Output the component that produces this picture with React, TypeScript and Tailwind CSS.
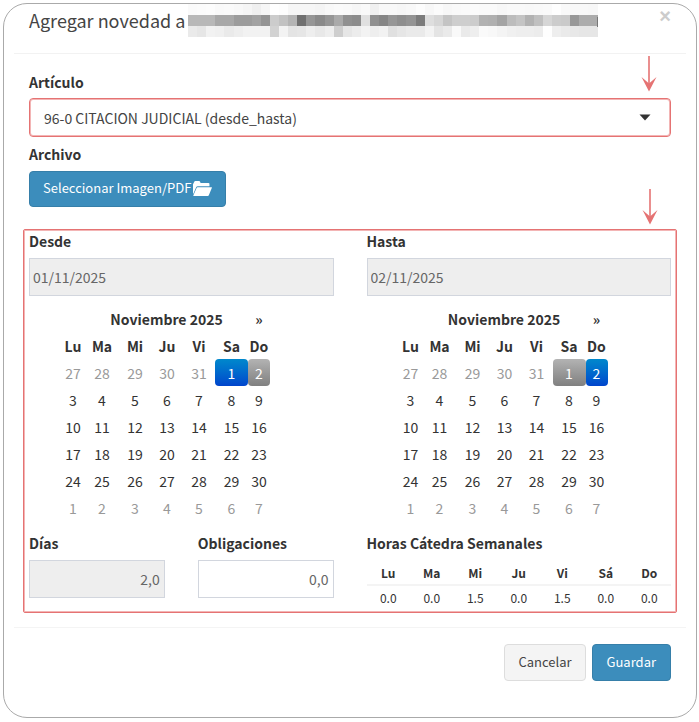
import { useState } from "react";

type Tone = "start" | "range";

const WEEKDAYS = ["Lu", "Ma", "Mi", "Ju", "Vi", "Sa", "Do"];

const WEEKS = [
  [27, 28, 29, 30, 31, 1, 2],
  [3, 4, 5, 6, 7, 8, 9],
  [10, 11, 12, 13, 14, 15, 16],
  [17, 18, 19, 20, 21, 22, 23],
  [24, 25, 26, 27, 28, 29, 30],
  [1, 2, 3, 4, 5, 6, 7],
];

const HOURS = [
  { day: "Lu", value: "0.0" },
  { day: "Ma", value: "0.0" },
  { day: "Mi", value: "1.5" },
  { day: "Ju", value: "0.0" },
  { day: "Vi", value: "1.5" },
  { day: "Sá", value: "0.0" },
  { day: "Do", value: "0.0" },
];

// grey levels of the pixelated name, one row per band, 9px per cell
const MOSAIC = [
  {
    y: 0,
    h: 11,
    cells: [
      250, 251, 252, 249, 250, 248, 245, 239, 246, 255, 253, 246, 246, 246, 244, 248, 250, 249, 246, 249, 240, 248, 248,
      246, 248, 252, 247, 251, 247, 249, 250, 251, 250, 250, 247, 249, 249, 248, 249, 250, 254, 249, 248, 248, 247, 249,
    ],
  },
  {
    y: 11,
    h: 11,
    cells: [
      184, 184, 184, 168, 168, 156, 156, 162, 148, 204, 194, 180, 112, 150, 138, 150, 170, 144, 140, 224, 144, 134, 150,
      142, 148, 124, 222, 214, 196, 206, 206, 204, 178, 176, 164, 188, 196, 178, 192, 214, 204, 202, 152, 172, 172,
    ],
  },
  {
    y: 22,
    h: 11,
    cells: [
      234, 230, 242, 240, 234, 238, 242, 242, 242, 210, 243, 228, 230, 238, 232, 238, 206, 230, 236, 243, 238, 242, 224,
      230, 234, 234, 243, 228, 234, 249, 234, 238, 250, 248, 244, 240, 238, 238, 236, 254, 238, 234, 232, 230, 230,
    ],
  },
];

function Mosaic() {
  return (
    <svg width="410" height="33" viewBox="0 0 410 33" shapeRendering="crispEdges" aria-hidden="true">
      {MOSAIC.map((band) =>
        band.cells.map((level, i) => (
          <rect
            key={`${band.y}-${i}`}
            x={i * 9.1}
            y={band.y}
            width="9.1"
            height={band.h}
            fill={`rgb(${level},${level},${level})`}
          />
        ))
      )}
      <rect x="409" y="13" width="1" height="10" fill="#777" />
    </svg>
  );
}

function Arrow() {
  return (
    <svg width="16" height="36" viewBox="0 0 16 36" aria-hidden="true">
      <path d="M8 0V28" stroke="#e57373" strokeWidth="1.6" />
      <path d="M0.5 21L8 35.5L15.5 21L8 27.5Z" fill="#e57373" />
    </svg>
  );
}

function FolderIcon() {
  return (
    <svg width="19" height="15" viewBox="0 0 18 14" fill="currentColor" aria-hidden="true">
      <path d="M0 12V3L1.2 0.6Q1.5 0 2.2 0H5.8Q6.4 0 6.7 0.6L7.2 1.7H14.6Q15.6 1.7 15.6 2.6V4.8H4.4Q3.5 4.8 3.1 5.5L0.3 12Z" />
      <path d="M4.3 5.9H17.6Q18.1 5.9 17.9 6.4L15 13.3Q14.7 14 14 14H0.6Q0.2 14 0.4 13.5L3.4 6.5Q3.6 5.9 4.3 5.9Z" />
    </svg>
  );
}

function dayClass(outside: boolean, tone?: Tone) {
  if (tone === "start") return "bg-linear-to-b from-[#0088cc] to-[#0044cc] text-white";
  if (tone === "range") return "bg-linear-to-b from-[#b3b3b3] to-[#808080] text-white";
  return outside ? "text-[#999]" : "text-[#333]";
}

function Calendar({ tones }: { tones: Record<string, Tone> }) {
  return (
    <table className="ml-8 table-fixed border-separate border-spacing-0 text-center">
      <colgroup>
        <col className="w-6" />
        <col className="w-[34px]" />
        <col className="w-8" />
        <col className="w-8" />
        <col className="w-8" />
        <col className="w-[33px]" />
        <col className="w-[22px]" />
      </colgroup>
      <thead>
        <tr className="h-[27px]">
          <td />
          <th colSpan={5}>Noviembre 2025</th>
          <th>
            <button type="button" aria-label="Mes siguiente">
              »
            </button>
          </th>
        </tr>
        <tr className="h-[27px]">
          {WEEKDAYS.map((day) => (
            <th key={day}>{day}</th>
          ))}
        </tr>
      </thead>
      <tbody>
        {WEEKS.map((week, row) => (
          <tr key={row} className="h-[27px]">
            {week.map((day, col) => {
              const outside = (row === 0 && col < 5) || row === 5;
              return (
                <td key={col} className={`rounded p-0 ${dayClass(outside, tones[`${row}-${col}`])}`}>
                  {day}
                </td>
              );
            })}
          </tr>
        ))}
      </tbody>
    </table>
  );
}

export default function App() {
  const [article, setArticle] = useState("96-0");
  const [obligations, setObligations] = useState("0,0");

  return (
    <div className="bg-white py-[3px] pr-[2px] pl-[3px] font-['Noto_Sans_CJK_JP','Noto_Sans',sans-serif] text-[14px] leading-5 text-[#333]">
      <form
        className="rounded-[24px] border border-[#aaa] px-[10px] pb-9"
        onSubmit={(e) => e.preventDefault()}
      >
        <header className="flex h-[50px] items-start justify-between border-b border-[#f2f2f2] px-[15px]">
          <div className="flex">
            <h1 className="pt-[2px] text-[18px] leading-7 text-[#444]">Agregar novedad a</h1>
            <div className="pl-[3px]">
              <Mosaic />
            </div>
          </div>
          <button
            type="button"
            aria-label="Cerrar"
            className="mt-[2px] font-['Liberation_Sans',sans-serif] text-[20px] leading-5 font-bold text-[#ccc]"
          >
            ×
          </button>
        </header>

        <div className="px-[15px] pt-[18px]">
          <label htmlFor="article" className="mb-[6px] block font-bold">
            Artículo
          </label>
          <div className="relative">
            <select
              id="article"
              value={article}
              onChange={(e) => setArticle(e.target.value)}
              className="block h-[39px] w-full appearance-none rounded border border-[#e57373] bg-white px-[14px] text-[#444] shadow-[inset_0_0_0_1px_#f3b5b5]"
            >
              <option value="96-0">96-0 CITACION JUDICIAL (desde_hasta)</option>
            </select>
            <svg className="pointer-events-none absolute top-4 right-5" width="12" height="7" viewBox="0 0 12 7">
              <path d="M0.5 0.5H11.5L6 6.5Z" fill="#333" />
            </svg>
            <div className="absolute right-[14px] bottom-full pb-[6px]">
              <Arrow />
            </div>
          </div>

          <p className="mt-[7px] mb-[7px] font-bold">Archivo</p>
          <button
            type="button"
            className="flex h-9 items-center gap-[2px] rounded border border-[#367fa9] bg-[#3c8dbc] px-[13px] pb-[2px] text-[13px] text-white"
          >
            Seleccionar Imagen/PDF
            <FolderIcon />
          </button>
        </div>

        <section className="relative mx-[9px] mt-[22px] rounded-xs border border-[#e57373] px-[5px] pt-[1px] pb-[3px] shadow-[inset_0_0_0_1px_#f3b5b5]">
          <div className="absolute right-[18px] bottom-full pb-[5px]">
            <Arrow />
          </div>
          <div className="grid grid-cols-2 gap-x-[33px]">
            <div>
              <label htmlFor="from" className="block font-bold">
                Desde
              </label>
              <input
                id="from"
                readOnly
                value="01/11/2025"
                className="mt-[7px] mb-[9px] block h-[38px] w-full border border-[#d2d6de] bg-[#eee] px-[3px] text-[#666]"
              />
              <Calendar tones={{ "0-5": "start", "0-6": "range" }} />
            </div>
            <div>
              <label htmlFor="to" className="block font-bold">
                Hasta
              </label>
              <input
                id="to"
                readOnly
                value="02/11/2025"
                className="mt-[7px] mb-[9px] block h-[38px] w-full border border-[#d2d6de] bg-[#eee] px-[3px] text-[#666]"
              />
              <Calendar tones={{ "0-5": "range", "0-6": "start" }} />
            </div>
          </div>

          <div className="mt-3 grid grid-cols-2 gap-x-[33px]">
            <div className="grid grid-cols-2 gap-x-[33px]">
              <div>
                <label htmlFor="days" className="block font-bold">
                  Días
                </label>
                <input
                  id="days"
                  readOnly
                  value="2,0"
                  className="mt-[7px] block h-[38px] w-full border border-[#d2d6de] bg-[#eee] px-1 text-right text-[#666]"
                />
              </div>
              <div>
                <label htmlFor="obligations" className="block font-bold">
                  Obligaciones
                </label>
                <input
                  id="obligations"
                  value={obligations}
                  onChange={(e) => setObligations(e.target.value)}
                  className="mt-[7px] block h-[38px] w-full border border-[#d2d6de] bg-white px-1 text-right text-[#666]"
                />
              </div>
            </div>
            <div>
              <h2 className="font-bold">Horas Cátedra Semanales</h2>
              <table className="w-full table-fixed text-center text-[12px] leading-5">
                <thead>
                  <tr className="h-8 border-b-2 border-[#f4f4f4]">
                    {HOURS.map((item) => (
                      <th key={item.day} className="pt-2">
                        {item.day}
                      </th>
                    ))}
                  </tr>
                </thead>
                <tbody>
                  <tr className="h-6">
                    {HOURS.map((item) => (
                      <td key={item.day}>{item.value}</td>
                    ))}
                  </tr>
                </tbody>
              </table>
            </div>
          </div>
        </section>

        <footer className="mt-[14px] flex justify-end gap-[6px] border-t border-[#f4f4f4] px-[15px] pt-4 text-[13px]">
          <button type="button" className="h-[37px] rounded border border-[#ddd] bg-[#f4f4f4] px-[13px] pb-[2px] text-[#444]">
            Cancelar
          </button>
          <button type="submit" className="h-[37px] rounded border border-[#367fa9] bg-[#3c8dbc] px-[14px] pb-[2px] text-white">
            Guardar
          </button>
        </footer>
      </form>
    </div>
  );
}
